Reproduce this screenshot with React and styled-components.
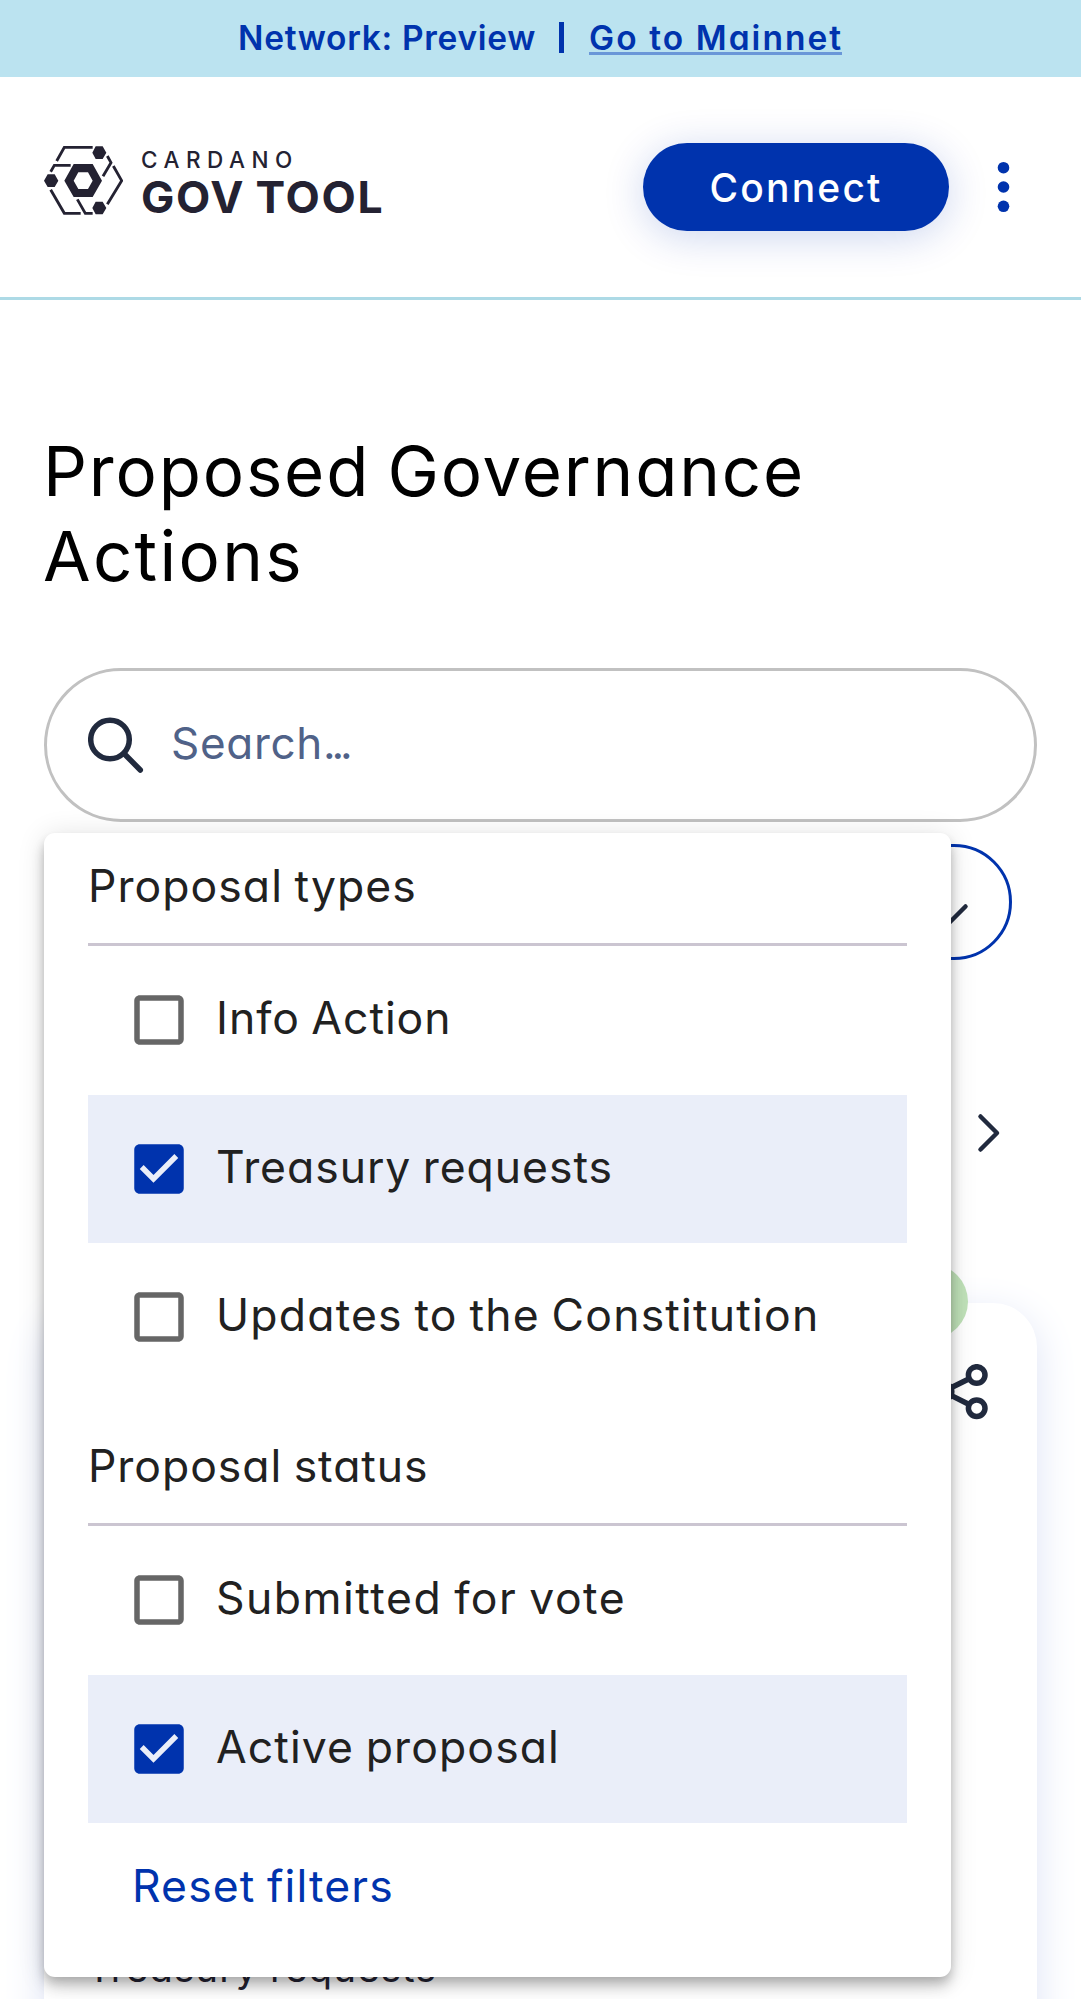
import React from "react";
import styled, { createGlobalStyle } from "styled-components";

const colors = {
  blue: "#0033ad",
  ink: "#212a3e",
  text: "#212121",
  logo: "#242232",
};

const GlobalStyle = createGlobalStyle`
  *, *::before, *::after { box-sizing: border-box; }
  body {
    margin: 0;
    background: #fff;
    font-family: Inter, "Open Sans", sans-serif;
    font-feature-settings: "cv11";
    color: ${colors.text};
  }
`;

const Page = styled.div`
  height: 1999px;
  overflow: hidden;
  background: #fff;
`;

const Label = styled.span`
  white-space: pre;
  letter-spacing: ${(p) => p.$track || 0}px;
`;

const Banner = styled.div`
  height: 77px;
  display: flex;
  align-items: center;
  padding: 0 0 2px 238px;
  background: #bbe3f0;
  color: ${colors.blue};
  font-size: 33.5px;
  font-weight: 600;
  line-height: 50px;
`;

const Separator = styled.span`
  width: 5px;
  height: 31px;
  margin: 0 25px 0 23px;
  background: ${colors.blue};
`;

const BannerLink = styled.a`
  width: 253px;
  height: 34px;
  line-height: 34px;
  border-bottom: 3px solid #6a97d8;
  color: inherit;
  text-decoration: none;
`;

const Header = styled.header`
  height: 223px;
  display: flex;
  align-items: flex-start;
  justify-content: space-between;
  padding: 66px 70px 0 44px;
  border-bottom: 3px solid #addae6;
`;

const Brand = styled.div`
  display: flex;
  gap: 18px;
  padding-top: 3px;
  color: ${colors.logo};
`;

const BrandText = styled.div`
  display: flex;
  flex-direction: column;
  padding-top: 2px;
`;

const BrandTop = styled(Label)`
  font-size: 22.5px;
  line-height: 24px;
  font-weight: 500;
`;

const BrandName = styled(Label)`
  font-size: 44.5px;
  line-height: 50px;
  font-weight: 650;
  word-spacing: -2px;
`;

const Actions = styled.div`
  display: flex;
  align-items: center;
  gap: 47px;
`;

const ConnectButton = styled.button`
  width: 306px;
  height: 88px;
  padding: 0;
  border: 0;
  border-radius: 44px;
  background: ${colors.blue};
  color: #fff;
  font: inherit;
  font-size: 39px;
  font-weight: 500;
  box-shadow: 0 6px 41px rgba(0, 51, 173, 0.2);
`;

const Heading = styled.h1`
  margin: 0;
  padding: 129px 43px 0;
  font-size: 69px;
  line-height: 85px;
  font-weight: 400;
  word-spacing: -4px;
  color: #000;
  display: flex;
  flex-direction: column;
`;

const SearchArea = styled.div`
  position: relative;
  margin: 69px 44px 0;
`;

const SearchBox = styled.div`
  height: 154px;
  display: flex;
  align-items: center;
  gap: 27px;
  padding-left: 41px;
  border: 3px solid #c1c1c1;
  border-radius: 77px;
  font-size: 44px;
  color: #506288;
`;

const Placeholder = styled(Label)`
  padding-bottom: 4px;
`;

const FilterRow = styled.div`
  display: flex;
  justify-content: flex-end;
  padding: 22px 25px 0 0;
`;

const FilterButton = styled.div`
  width: 330px;
  height: 116px;
  display: flex;
  align-items: center;
  justify-content: flex-end;
  padding: 25px 40px 0 0;
  border: 3px solid ${colors.blue};
  border-radius: 58px;
`;

const CarouselRow = styled.div`
  display: flex;
  justify-content: flex-end;
  padding: 153px 36px 0 0;
`;

const Card = styled.div`
  height: 900px;
  margin: 150px 0 0;
  width: 993px;
  display: flex;
  flex-direction: column;
  border-radius: 44px;
  background: #fff;
  box-shadow: 0 11px 41px #dde3f5;
`;

const StatusPill = styled.div`
  align-self: flex-end;
  width: 260px;
  height: 75px;
  margin: -39px 69px 0 0;
  border-radius: 38px;
  background: #bfe1b8;
`;

const ShareRow = styled.div`
  display: flex;
  justify-content: flex-end;
  padding: 25px 49px 0 0;
`;

const CardText = styled.div`
  padding: 523px 0 0 43px;
  font-size: 38.5px;
  line-height: 50px;
  color: ${colors.logo};
`;

const FilterMenu = styled.div`
  position: absolute;
  top: 165px;
  left: 0;
  width: 907px;
  height: 1144px;
  padding: 0 44px;
  border-radius: 11px;
  background: #fff;
  box-shadow:
    0 5.5px 11px -2.75px rgba(0, 0, 0, 0.2),
    0 11px 13.75px 0 rgba(0, 0, 0, 0.14),
    0 2.75px 27.5px 0 rgba(0, 0, 0, 0.12);
  font-size: 44.5px;
  word-spacing: -2px;
`;

const GroupTitle = styled.div`
  height: ${(p) => (p.$first ? 113 : 134.5)}px;
  display: flex;
  align-items: flex-end;
  padding-bottom: 27px;
  border-bottom: 3px solid #cbc5d1;
  line-height: 60px;
`;

const Option = styled.div`
  height: 148.5px;
  display: flex;
  align-items: center;
  gap: 24px;
  padding-left: 38px;
  background: ${(p) => (p.$checked ? "#eaeef9" : "transparent")};
`;

const OptionLabel = styled(Label)`
  padding-bottom: 4px;
`;

const Reset = styled.div`
  padding: 33px 0 0 44px;
  line-height: 60px;
  color: ${colors.blue};
`;

const Logo = () => (
  <svg width="79" height="69" viewBox="42 77 237 207" fill="none" stroke="currentColor" strokeWidth="8.5">
    <path d="M80 122 103 81H188M62 154 73 135H122M232 107 243 127 219 168M250 137 275 181 232 252M62 208 103 279H152M142 237 166 279H188" />
    <g fill="currentColor" stroke="none">
      <path fillRule="evenodd" d="M103 181 131 131H188L216 181 188 230H131ZM131 181 145 206H174L188 181 174 156H145Z" />
      <path d="M187 97 197 78H218L229 97 218 116H197ZM187 263 197 244H218L229 263 218 282H197ZM42 181 53 162H74L85 181 74 200H53Z" />
    </g>
  </svg>
);

const MoreDots = () => (
  <svg width="15" height="56" viewBox="0 0 15 56" fill={colors.blue}>
    <circle cx="7.5" cy="8.7" r="5.8" />
    <circle cx="7.5" cy="28" r="5.8" />
    <circle cx="7.5" cy="47.3" r="5.8" />
  </svg>
);

const SearchIcon = () => (
  <svg width="56" height="56" viewBox="0 0 56 56" fill="none" stroke={colors.ink} strokeWidth="5.5" strokeLinecap="round">
    <circle cx="22" cy="22.5" r="19.3" />
    <path d="M36 36.5 52.3 53" />
  </svg>
);

const Chevron = ({ down }) => (
  <svg width={down ? 40 : 24} height={down ? 24 : 40} fill="none" stroke={colors.ink} strokeWidth="4.5" strokeLinecap="round" strokeLinejoin="round">
    <path d={down ? "M3.5 3.5 20 20 36.5 3.5" : "M3.5 3.5 20 20 3.5 36.5"} />
  </svg>
);

const ShareIcon = () => (
  <svg width="56" height="56" viewBox="0 0 56 56" fill="none" stroke={colors.ink} strokeWidth="5.5">
    <circle cx="44.7" cy="11" r="8.3" />
    <circle cx="11.5" cy="27.6" r="8.3" />
    <circle cx="44.7" cy="44.2" r="8.3" />
    <path d="M19 23.8 37.2 14.7M19 31.4 37.2 40.5" />
  </svg>
);

const Checkbox = ({ checked }) => (
  <svg width="66" height="66" viewBox="0 0 24 24" fill={checked ? colors.blue : "#666"}>
    {checked ? (
      <path d="M19 3H5c-1.11 0-2 .9-2 2v14c0 1.1.89 2 2 2h14c1.11 0 2-.9 2-2V5c0-1.1-.89-2-2-2zm-9 14l-5-5 1.41-1.41L10 14.17l7.59-7.59L19 8l-9 9z" />
    ) : (
      <path d="M19 5v14H5V5h14m0-2H5c-1.1 0-2 .9-2 2v14c0 1.1.9 2 2 2h14c1.1 0 2-.9 2-2V5c0-1.1-.9-2-2-2z" />
    )}
  </svg>
);

const groups = [
  {
    title: "Proposal types",
    track: 1.05,
    options: [
      { label: "Info Action", track: 0.95 },
      { label: "Treasury requests", track: 0.95 , checked: true },
      { label: "Updates to the Constitution", track: 1.2 },
    ],
  },
  {
    title: "Proposal status",
    track: 0.95,
    options: [
      { label: "Submitted for vote", track: 1.5 },
      { label: "Active proposal", track: 1.1, checked: true },
    ],
  },
];

export default function App() {
  return (
    <Page>
      <GlobalStyle />
      <Banner>
        <Label $track={0.7}>Network: Preview</Label>
        <Separator />
        <BannerLink>
          <Label $track={2.05}>Go to Mainnet</Label>
        </BannerLink>
      </Banner>
      <Header>
        <Brand>
          <Logo />
          <BrandText>
            <BrandTop $track={6.5}>CARDANO</BrandTop>
            <BrandName $track={1.7}>GOV TOOL</BrandName>
          </BrandText>
        </Brand>
        <Actions>
          <ConnectButton>
            <Label $track={2.2}>Connect</Label>
          </ConnectButton>
          <MoreDots />
        </Actions>
      </Header>
      <Heading>
        <Label $track={1.8}>Proposed Governance</Label>
        <Label $track={2.3}>Actions</Label>
      </Heading>
      <SearchArea>
        <SearchBox>
          <SearchIcon />
          <Placeholder $track={0.7}>
            Search<Label $track={-4.2}>...</Label>
          </Placeholder>
        </SearchBox>
        <FilterRow>
          <FilterButton>
            <Chevron down />
          </FilterButton>
        </FilterRow>
        <CarouselRow>
          <Chevron />
        </CarouselRow>
        <Card>
          <StatusPill />
          <ShareRow>
            <ShareIcon />
          </ShareRow>
          <CardText>
            <Label $track={1.1}>Treasury requests</Label>
          </CardText>
        </Card>
        <FilterMenu>
          {groups.map((group, i) => (
            <React.Fragment key={group.title}>
              <GroupTitle $first={i === 0}>
                <Label $track={group.track}>{group.title}</Label>
              </GroupTitle>
              {group.options.map((o) => (
                <Option key={o.label} $checked={o.checked}>
                  <Checkbox checked={o.checked} />
                  <OptionLabel $track={o.track}>{o.label}</OptionLabel>
                </Option>
              ))}
            </React.Fragment>
          ))}
          <Reset>
            <Label $track={1.1}>Reset filters</Label>
          </Reset>
        </FilterMenu>
      </SearchArea>
    </Page>
  );
}
